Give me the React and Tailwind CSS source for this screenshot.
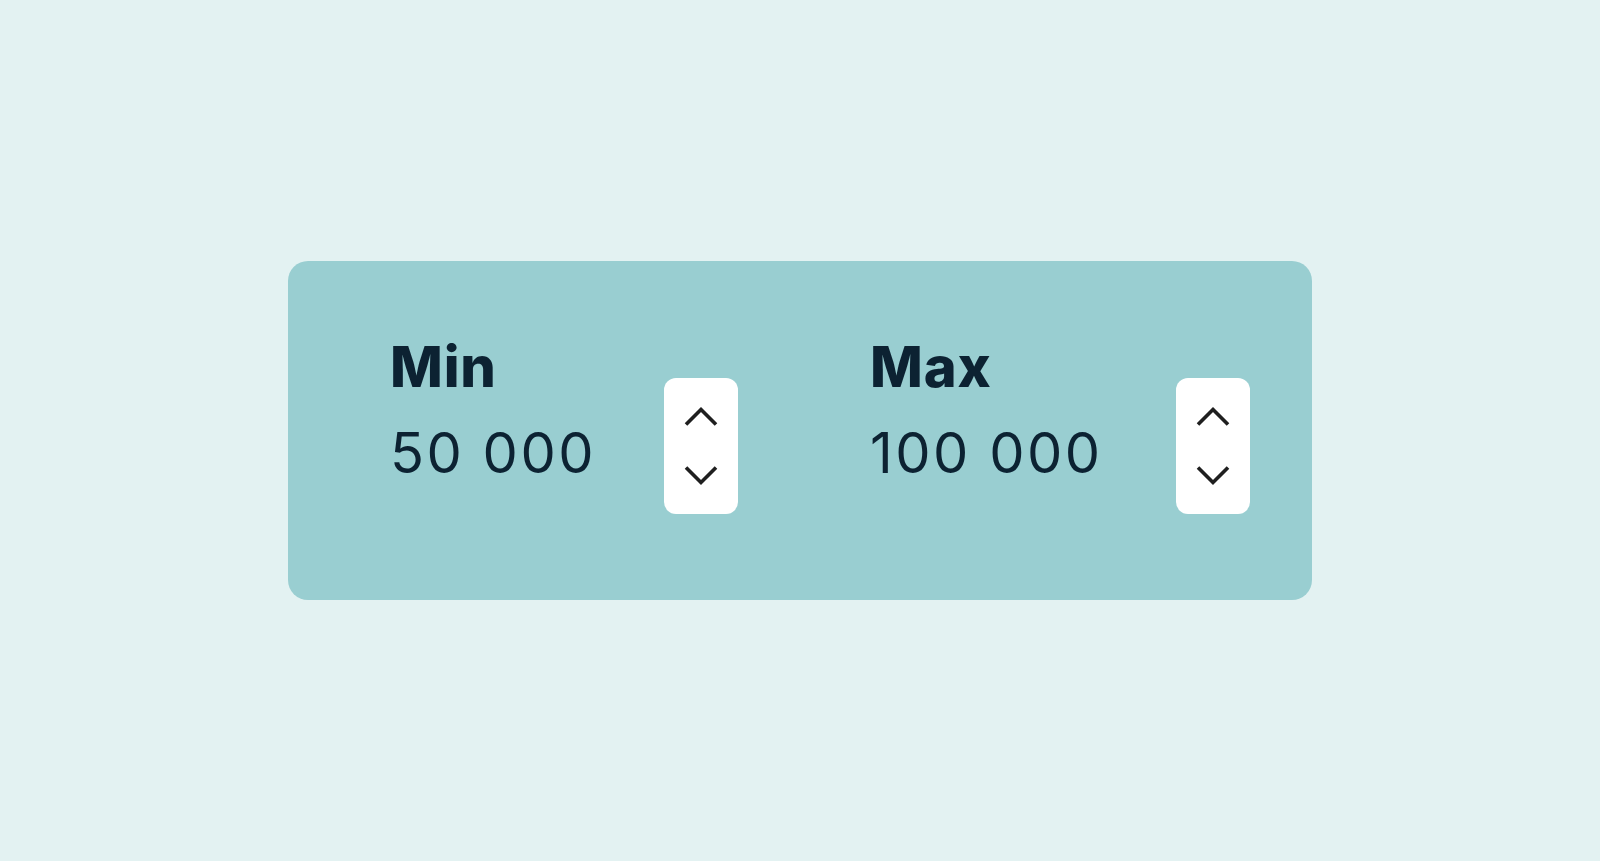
function Stepper() {
  return (
    <div className="mt-[39px] flex h-[136px] w-[74px] flex-col items-center justify-center gap-[40px] rounded-[12px] bg-white">
      <button aria-label="increase">
        <svg width="34" height="20" viewBox="0 0 34 20" fill="none">
          <polyline points="2,18.5 17,3.5 32,18.5" stroke="#1f1f1f" strokeWidth="3.6" />
        </svg>
      </button>
      <button aria-label="decrease">
        <svg width="34" height="20" viewBox="0 0 34 20" fill="none">
          <polyline points="2,1.5 17,16.5 32,1.5" stroke="#1f1f1f" strokeWidth="3.6" />
        </svg>
      </button>
    </div>
  );
}

function Field({ label, value, className }) {
  return (
    <div className={"flex items-start justify-between " + className}>
      <div className="flex flex-col text-[#0c2232]">
        <span className="text-[56px] font-extrabold leading-[56px] tracking-[0.8px]">{label}</span>
        <span className="mt-[30px] text-[56px] font-normal leading-[56px] tracking-[2.5px]">{value}</span>
      </div>
      <Stepper />
    </div>
  );
}

export default function App() {
  return (
    <div
      className="flex min-h-[861px] w-full items-center justify-center bg-[#e3f2f2]"
      style={{ fontFamily: "Inter, 'Noto Sans', sans-serif" }}
    >
      <div className="flex h-[339px] w-[1024px] items-start gap-[132px] rounded-[20px] bg-[#99ced1] pl-[102px] pr-[62px] pt-[78px]">
        <Field label="Min" value="50 000" className="w-[348px]" />
        <Field label="Max" value="100 000" className="flex-1" />
      </div>
    </div>
  );
}
